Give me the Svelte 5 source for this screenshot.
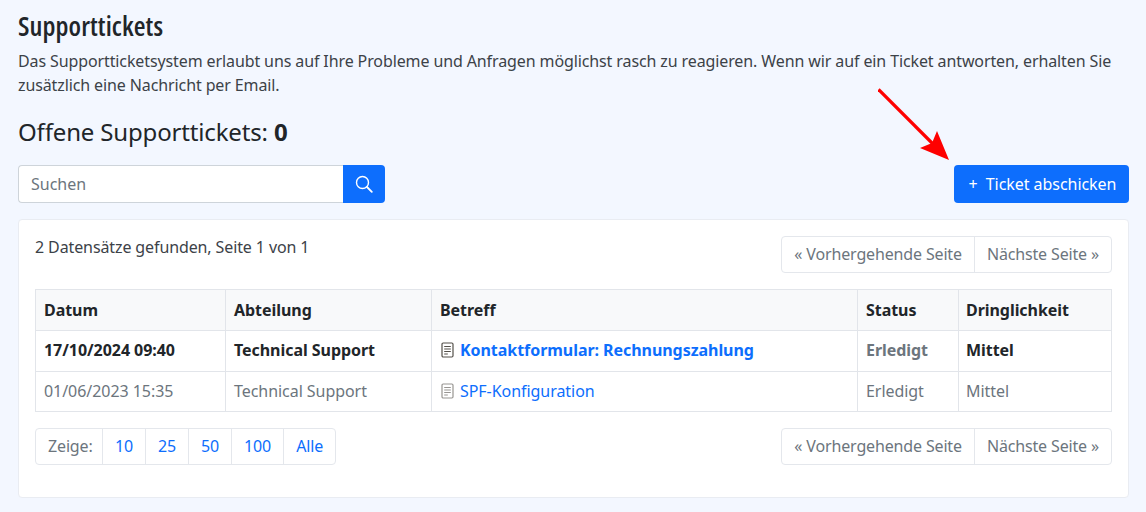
<script lang="ts">
  type Ticket = { date: string; dept: string; subject: string; status: string; urgency: string; unread: boolean };

  const tickets: Ticket[] = [
    { date: '17/10/2024 09:40', dept: 'Technical Support', subject: 'Kontaktformular: Rechnungszahlung', status: 'Erledigt', urgency: 'Mittel', unread: true },
    { date: '01/06/2023 15:35', dept: 'Technical Support', subject: 'SPF-Konfiguration', status: 'Erledigt', urgency: 'Mittel', unread: false },
  ];
  const sizes = ['10', '25', '50', '100', 'Alle'];
</script>

{#snippet pager()}
  <div class="group">
    <span class="item muted">« Vorhergehende Seite</span>
    <span class="item muted">Nächste Seite »</span>
  </div>
{/snippet}

<main class="page">
  <h1>Supporttickets</h1>
  <p class="intro">Das Supportticketsystem erlaubt uns auf Ihre Probleme und Anfragen möglichst rasch zu reagieren. Wenn wir auf ein Ticket antworten, erhalten Sie zusätzlich eine Nachricht per Email.</p>
  <h2>Offene Supporttickets: <strong>0</strong></h2>

  <div class="toolbar">
    <div class="search">
      <span class="field">Suchen</span>
      <span class="search-btn">
        <svg width="18" height="18" viewBox="0 0 18 18" fill="none" stroke="#fff" stroke-width="1.4" stroke-linecap="round">
          <circle cx="7.5" cy="7.5" r="6" />
          <path d="M12 12l4.8 4.8" stroke-width="1.8" />
        </svg>
      </span>
    </div>
    <span class="primary"><span class="plus">+</span>Ticket abschicken</span>
  </div>

  <section class="card">
    <div class="card-top">
      <span class="found">2 Datensätze gefunden, Seite 1 von 1</span>
      {@render pager()}
    </div>

    <table>
      <thead>
        <tr>
          <th class="c-date">Datum</th>
          <th class="c-dept">Abteilung</th>
          <th class="c-subj">Betreff</th>
          <th class="c-stat">Status</th>
          <th class="c-urg">Dringlichkeit</th>
        </tr>
      </thead>
      <tbody>
        {#each tickets as t}
          <tr class:unread={t.unread}>
            <td>{t.date}</td>
            <td>{t.dept}</td>
            <td>
              <span class="subject">
                <svg width="13" height="16" viewBox="0 0 13 16" fill="none">
                  <rect x="1" y="1" width="11" height="14" rx="1.2" fill="#fff" stroke="#54504a" stroke-width="1.2" />
                  <path d="M3.2 4.5h6.6M3.2 7h6.6M3.2 9.5h6.6M3.2 12h3.6" stroke="#54504a" stroke-width="1.1" />
                </svg>
                <a href="#ticket">{t.subject}</a>
              </span>
            </td>
            <td class="status">{t.status}</td>
            <td class="c-urg">{t.urgency}</td>
          </tr>
        {/each}
      </tbody>
    </table>

    <div class="card-bottom">
      <div class="group sizes">
        <span class="item muted">Zeige:</span>
        {#each sizes as s}
          <span class="item link">{s}</span>
        {/each}
      </div>
      {@render pager()}
    </div>
  </section>

  <svg class="arrow" width="80" height="80" viewBox="0 0 80 80">
    <path d="M0.5 1.5L56 57" stroke="#fe0000" stroke-width="3.2" fill="none" />
    <path d="M71 72L42 60L54 55L59 43Z" fill="#fe0000" />
  </svg>
</main>

<style>
  :global(body) {
    margin: 0;
    background: #f3f7ff;
    font-family: "Noto Sans", "Open Sans", sans-serif;
    font-size: 16px;
    color: #212529;
  }

  .page {
    position: relative;
    height: 512px;
    box-sizing: border-box;
    padding: 11px 17px 0 18px;
    overflow: hidden;
  }

  h1 {
    margin: 0 0 8px;
    font-family: "Open Sans", sans-serif;
    font-stretch: 75%;
    font-weight: 550;
    font-size: 27px;
    line-height: 30px;
    letter-spacing: 0.1px;
  }

  .intro {
    margin: 0 0 20px;
    line-height: 24px;
    letter-spacing: -0.11px;
    color: #3c4248;
  }

  h2 {
    margin: 0 0 19px;
    font-weight: 400;
    font-size: 24px;
    line-height: 29px;
    letter-spacing: -0.16px;
  }
  h2 strong { font-weight: 700; }

  .toolbar {
    display: flex;
    justify-content: space-between;
    margin-bottom: 16px;
  }

  .search {
    display: flex;
    width: 367px;
    height: 38px;
  }
  .field {
    flex: 1;
    box-sizing: border-box;
    padding-left: 12px;
    line-height: 36px;
    color: #6c757d;
    background: #fff;
    border: 1px solid #ced4da;
    border-right: 0;
    border-radius: 4px 0 0 4px;
  }
  .search-btn {
    width: 42px;
    display: flex;
    align-items: center;
    justify-content: center;
    background: #0d6efd;
    border-radius: 0 4px 4px 0;
  }

  .primary {
    width: 175px;
    height: 38px;
    box-sizing: border-box;
    padding-left: 2px;
    display: flex;
    align-items: center;
    justify-content: center;
    color: #fff;
    background: #0d6efd;
    border-radius: 4px;
    letter-spacing: -0.05px;
  }
  .plus { margin-right: 8px; font-size: 16px; }

  .card {
    height: 279px;
    box-sizing: border-box;
    padding: 16px;
    background: #fff;
    border: 1px solid #e9ecf2;
    border-radius: 4px;
  }

  .card-top, .card-bottom {
    display: flex;
    justify-content: space-between;
  }
  .card-top { margin-bottom: 16px; }
  .card-bottom { margin-top: 16px; }
  .found { line-height: 22px; color: #3c4248; letter-spacing: -0.11px; }

  .group {
    display: flex;
    height: 37px;
    box-sizing: border-box;
    border: 1px solid #e4e7ec;
    border-radius: 4px;
    letter-spacing: -0.15px;
  }
  .item {
    display: flex;
    align-items: center;
    padding: 0 12px 1px;
    border-left: 1px solid #e4e7ec;
  }
  .item:first-child { border-left: 0; }
  .sizes .item:first-child { padding-right: 9.5px; }
  .muted { color: #6c757d; }
  .link { color: #0d6efd; }

  table {
    width: 100%;
    border-collapse: collapse;
    table-layout: fixed;
  }
  th, td {
    height: 40px;
    box-sizing: border-box;
    padding: 0 8px 1px;
    border: 1px solid #e2e5ea;
    text-align: left;
    white-space: nowrap;
    color: #6c757d;
    letter-spacing: -0.05px;
  }
  th {
    height: 41px;
    padding-bottom: 0;
    color: #212529;
    font-weight: 700;
    background: #f8f9fa;
  }
  .unread td { height: 41px; padding-bottom: 2px; color: #212529; font-weight: 700; }
  .c-date { width: 190px; }
  .c-dept { width: 206px; }
  .c-subj { width: 426px; }
  .c-stat { width: 101px; }
  th.c-urg, td.c-urg { padding-left: 7px; }

  .unread td.status { color: #6c757d; }

  .subject {
    display: flex;
    align-items: center;
    gap: 6px;
    padding-left: 1px;
  }
  .subject a { color: #0d6efd; text-decoration: none; }
  .unread .subject a { font-weight: 700; }
  tr:not(.unread) .subject svg { opacity: 0.6; }

  .arrow {
    position: absolute;
    left: 878px;
    top: 88px;
  }
</style>
